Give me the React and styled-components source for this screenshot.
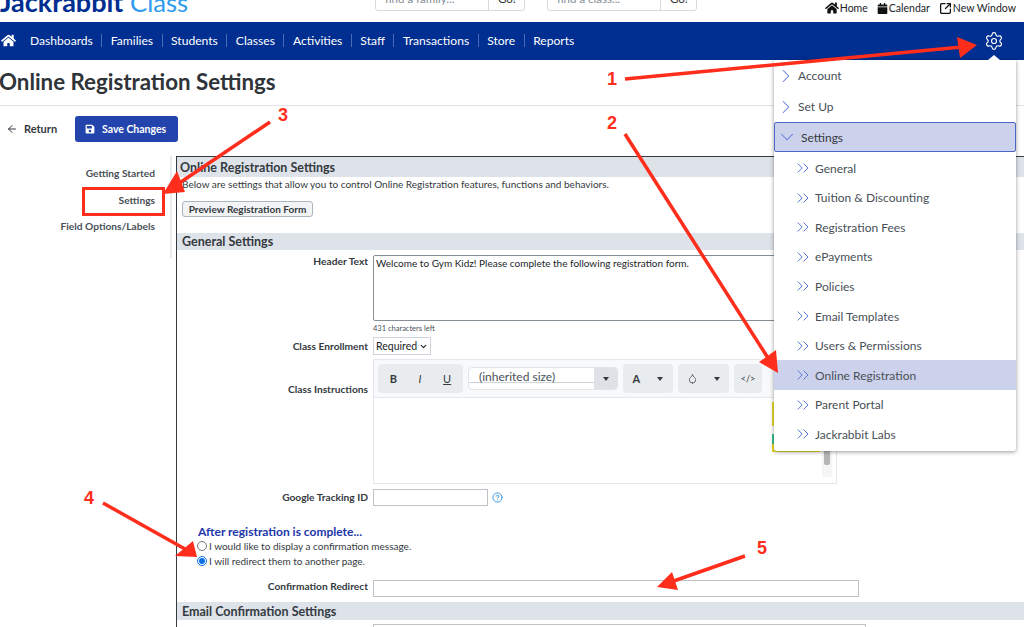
import styled, { createGlobalStyle } from "styled-components";
import { ArrowLeft, ChevronDown, ChevronRight, ChevronsRight, CircleHelp, Droplet, Settings, SquareArrowOutUpRight } from "lucide-react";
import { FaCalendar, FaHome, FaSave } from "react-icons/fa";

const Global = createGlobalStyle`
  html, body { margin: 0; padding: 0; background: #fff; }
  * { box-sizing: border-box; }
  body { font-family: Lato, "Noto Sans", sans-serif; color: #343a40; }
`

const Page = styled.div`
  position: relative;
  width: 1024px;
  height: 627px;
  overflow: hidden;
  background: #fff;
`

const TopBar = styled.header`
  display: flex;
  height: 22px;
  overflow: hidden;
`

const Logo = styled.div`
  width: 375px;
  margin-top: -14px;
  height: 32px;
  font-size: 27px;
  line-height: 32px;
  white-space: nowrap;
  font-weight: 700;
  color: #002e91;
  span { color: #2e9bee; font-size: 25.7px; font-weight: 400; }
`

const SearchGroup = styled.div`
  display: flex;
  width: ${(p) => p.$width}px;
  height: 23px;
  margin-top: -12px;
  margin-right: 22px;
  border: 1px solid #d5d8dc;
  border-radius: 3px;
  font-size: 11.5px;
  line-height: 20px;
`

const SearchInput = styled.div`
  flex: 1;
  padding-left: 9px;
  color: #868e96;
`

const SearchGo = styled.div`
  width: 36px;
  padding-left: 9px;
  border-left: 1px solid #d5d8dc;
  color: #333;
`

const TopLinks = styled.nav`
  display: flex;
  align-items: flex-start;
  gap: 9px;
  margin-left: auto;
  margin-right: 8px;
  padding-top: 1px;
  font-size: 10.5px;
  line-height: 14px;
  color: #212529;
`

const TopLink = styled.span`
  display: flex;
  align-items: center;
  gap: 1px;
`

const NavBar = styled.nav`
  display: flex;
  align-items: center;
  height: 38px;
  background: #002e91;
  color: #fff;
  font-size: 12.1px;
`

const HomeLink = styled.span`
  display: flex;
  width: 30px;
  padding-left: 1px;
  margin-top: -2px;
`

const NavItem = styled.span`
  padding-right: 8.5px;
  margin-right: 8.5px;
  margin-bottom: 1px;
  line-height: 13px;
  border-right: ${(p) => (p.$last ? "none" : "1px solid #4a6cb3")};
`

const GearLink = styled.span`
  display: flex;
  margin-left: auto;
  margin-right: 20px;
`

const TitleRow = styled.div`
  height: 46px;
  border-bottom: 1px solid #dee2e6;
`

const Title = styled.h1`
  margin: 0 0 0 -1px;
  font-size: 22.3px;
  line-height: 44px;
  font-weight: 700;
  color: #2f3439;
`

const ActionRow = styled.div`
  display: flex;
  align-items: center;
  height: 50px;
  padding-left: 6px;
  padding-bottom: 5px;
`

const ReturnLink = styled.span`
  display: flex;
  align-items: center;
  gap: 6px;
  width: 69px;
  font-size: 11px;
  font-weight: 700;
  color: #343a40;
`

const SaveButton = styled.button`
  display: flex;
  align-items: center;
  gap: 7px;
  width: 103px;
  height: 26px;
  padding: 0 0 0 10px;
  border: none;
  border-radius: 3px;
  background: #2344ad;
  color: #fff;
  font: 700 10.5px Lato, sans-serif;
`

const Columns = styled.div`
  display: flex;
  align-items: flex-start;
`

const SideNav = styled.aside`
  display: flex;
  flex-direction: column;
  align-items: flex-end;
  gap: 13.5px;
  width: 172px;
  height: 102px;
  padding: 11px 15px 0 0;
  border-right: 2px solid #e9ecef;
  font-size: 10.2px;
  line-height: 13px;
  font-weight: 700;
  color: #495057;
`

const Panel = styled.main`
  flex: 1;
  margin-left: 4px;
  height: 480px;
  border-left: 1px solid #343a40;
  border-top: 1px solid #343a40;
`

const SectionBar = styled.h2`
  height: ${(p) => p.$height}px;
  margin: ${(p) => p.$top || 0}px 0 0;
  padding: ${(p) => p.$drop || 0}px 0 0 ${(p) => p.$inset}px;
  background: #dee2e9;
  font-size: 12.5px;
  line-height: ${(p) => p.$height - (p.$drop || 0)}px;
  font-weight: 700;
  color: #343a40;
`

const Intro = styled.p`
  margin: 0;
  padding: 1px 0 0 5px;
  height: 24px;
  font-size: 10px;
  line-height: 13px;
  color: #343a40;
`

const PreviewButton = styled.button`
  display: block;
  width: 131px;
  height: 16px;
  margin: 0 0 16px 5px;
  padding: 0;
  border: 1px solid #adb5bd;
  border-radius: 3px;
  background: #f1f3f5;
  color: #343a40;
  font: 700 10px/13px Lato, sans-serif;
`

const FormRow = styled.div`
  display: grid;
  grid-template-columns: 191px auto;
  column-gap: 5px;
  margin-top: ${(p) => p.$top || 0}px;
`

const FieldLabel = styled.label`
  padding-top: ${(p) => p.$drop || 0}px;
  text-align: right;
  font-size: 10.2px;
  line-height: 13px;
  font-weight: 700;
  color: #343a40;
`

const TextBox = styled.div`
  width: 500px;
  height: 66px;
  padding: 1px 2px;
  border: 1px solid #868e96;
  border-radius: 2px;
  font-size: 10px;
  line-height: 13px;
  color: #212529;
`

const CharCount = styled.div`
  height: 14px;
  padding-top: 2px;
  font-size: 7.5px;
  line-height: 11px;
  color: #495057;
`

const SelectBox = styled.div`
  display: flex;
  align-items: center;
  gap: 2px;
  width: 58px;
  height: 18px;
  margin-top: 2px;
  padding-left: 2px;
  border: 1px solid #ced4da;
  font-size: 10.5px;
  color: #212529;
`

const Editor = styled.div`
  width: 464px;
  height: 125px;
  border: 1px solid #e4e8ee;
`

const Toolbar = styled.div`
  display: flex;
  gap: 5px;
  height: 38px;
  padding: 4px 4px;
  background: #f8f9fa;
  border-bottom: 1px solid #e4e8ee;
`

const ToolGroup = styled.div`
  display: flex;
  align-items: center;
  justify-content: space-around;
  width: ${(p) => p.$width}px;
  height: 29px;
  padding: 0 1px;
  border-radius: 4px;
  background: #e9ecef;
  color: #343a40;
  font-size: 10px;
`

const ToolText = styled.span`
  font-size: ${(p) => p.$size || 11}px;
  font-weight: ${(p) => (p.$bold ? 700 : 400)};
  font-style: ${(p) => (p.$italic ? "italic" : "normal")};
  text-decoration: ${(p) => (p.$underline ? "underline" : "none")};
`

const Caret = styled.i`
  width: 0;
  height: 0;
  border-left: 3px solid transparent;
  border-right: 3px solid transparent;
  border-top: 4px solid #343a40;
`

const SizeSelect = styled.div`
  display: flex;
  width: 150px;
  height: 23px;
  margin-top: 3px;
  border: 1px solid #e1e4e8;
  border-radius: 4px;
  background: #fff;
  overflow: hidden;
`

const SizeValue = styled.div`
  flex: 1;
  height: 15px;
  padding: 2px 0 0 10px;
  border-bottom: 1px solid #ced4da;
  font-size: 12px;
  line-height: 13px;
  color: #495057;
`

const SizeArrow = styled.div`
  display: flex;
  align-items: center;
  justify-content: center;
  width: 23px;
  background: #dee2e6;
`

const EditorBody = styled.div`
  display: flex;
  align-items: flex-start;
  padding-left: 398px;
`

const PictureEdge = styled.div`
  width: 48px;
  height: 50px;
  margin-top: 4px;
  border-bottom: 2px solid #eadb2c;
  background: linear-gradient(#eadb2c 0 24px, #fff 24px 32px, #3cc48c 32px 42px, #eadb2c 42px) no-repeat left top / 3px 100%;
`

const ScrollTrack = styled.div`
  width: 10px;
  height: 30px;
  margin: 49px 0 0 2px;
  padding: 1px 2px 0;
  background: #f5f5f5;
`

const ScrollThumb = styled.div`
  height: 17px;
  border-radius: 2px;
  background: #b5b5b5;
`

const FieldLine = styled.div`
  display: flex;
  align-items: center;
  gap: 4px;
  color: #2f8fe0;
`

const TextInput = styled.div`
  width: ${(p) => p.$width}px;
  height: ${(p) => p.$height || 17}px;
  border: 1px solid #bcc2c8;
`

const ChoiceBlock = styled.div`
  height: 51px;
  margin-top: 18px;
  padding-left: 20px;
`

const ChoiceTitle = styled.div`
  height: 15px;
  padding-left: 1px;
  font-size: 12px;
  line-height: 15px;
  font-weight: 700;
  color: #1b36a8;
`

const Choice = styled.label`
  display: flex;
  align-items: center;
  gap: 2px;
  height: 14.5px;
  font-size: 10px;
  color: #343a40;
`

const Radio = styled.input`
  width: 10px;
  height: 10px;
  margin: 0;
  accent-color: #0b6fe8;
`

const Menu = styled.div`
  position: absolute;
  top: 60px;
  left: 774px;
  width: 242px;
  height: 391px;
  background: #fff;
  box-shadow: 0 1px 4px rgba(0, 0, 0, 0.4);
  border-radius: 0 0 3px 3px;
  font-size: 12px;
  color: #495057;
  &::before {
    content: "";
    position: absolute;
    top: -5px;
    left: 214px;
    border-left: 6px solid transparent;
    border-right: 6px solid transparent;
    border-bottom: 5px solid #fff;
  }
`

const MenuGroup = styled.div`
  display: flex;
  align-items: center;
  gap: ${(p) => (p.$open ? 3 : 1)}px;
  height: ${(p) => (p.$open ? 30 : 31)}px;
  padding-left: 1px;
  color: ${(p) => (p.$open ? "#343a40" : "#495057")};
  ${(p) => p.$open && "background: #cdd2ec; border: 1px solid #4b66c6; border-radius: 2px;"}
`

const MenuList = styled.div`
  padding-top: 1.5px;
`

const MenuItem = styled.div`
  display: flex;
  align-items: center;
  gap: 2.5px;
  height: 29.55px;
  padding-left: 18.5px;
  background: ${(p) => (p.$active ? "#cdd2ec" : "transparent")};
`

const MenuIcon = styled.span`
  display: flex;
  color: #5a78d6;
`

const Overlay = styled.svg`
  position: absolute;
  top: 0;
  left: 0;
  pointer-events: none;
`

const Callout = styled.span`
  position: absolute;
  top: ${(p) => p.$y}px;
  left: ${(p) => p.$x}px;
  font: 700 18px/20px "Liberation Sans", sans-serif;
  color: #ff2d1c;
`

const Highlight = styled.div`
  position: absolute;
  top: 187px;
  left: 82px;
  width: 83px;
  height: 29px;
  border: 3px solid #ff2d1c;
`

const navItems = ["Dashboards", "Families", "Students", "Classes", "Activities", "Staff", "Transactions", "Store", "Reports"];
const settingsItems = ["General", "Tuition & Discounting", "Registration Fees", "ePayments", "Policies", "Email Templates", "Users & Permissions", "Online Registration", "Parent Portal", "Jackrabbit Labs"];

const arrows = [
  { line: "625,79 962,47", head: "977,45 957,37 960,58" },
  { line: "625,134 768,358", head: "778,373 759,362 776,350" },
  { line: "270,122 175,186", head: "163,194 177,171 185,192" },
  { line: "103,503 185,549", head: "197,557 175,556 193,541" },
  { line: "745,556 668,583", head: "657,587 672,572 678,590" },
];

const callouts = [
  { id: "1", x: 607, y: 69 },
  { id: "2", x: 607, y: 113 },
  { id: "3", x: 278, y: 105 },
  { id: "4", x: 84, y: 488 },
  { id: "5", x: 757, y: 538 },
];

export default function App() {
  return (
    <Page>
      <Global />
      <TopBar>
        <Logo>Jackrabbit <span>Class</span></Logo>
        <SearchGroup $width={150}>
          <SearchInput>find a family...</SearchInput>
          <SearchGo>Go!</SearchGo>
        </SearchGroup>
        <SearchGroup $width={150}>
          <SearchInput>find a class...</SearchInput>
          <SearchGo>Go!</SearchGo>
        </SearchGroup>
        <TopLinks>
          <TopLink><FaHome size={14} color="#111" />Home</TopLink>
          <TopLink><FaCalendar size={11} color="#111" />Calendar</TopLink>
          <TopLink><SquareArrowOutUpRight size={13} strokeWidth={2.4} color="#111" />New Window</TopLink>
        </TopLinks>
      </TopBar>

      <NavBar>
        <HomeLink><FaHome size={15} /></HomeLink>
        {navItems.map((item, i) => (
          <NavItem key={item} $last={i === navItems.length - 1}>{item}</NavItem>
        ))}
        <GearLink><Settings size={20} strokeWidth={1.4} /></GearLink>
      </NavBar>

      <TitleRow>
        <Title>Online Registration Settings</Title>
      </TitleRow>

      <ActionRow>
        <ReturnLink><ArrowLeft size={12} />Return</ReturnLink>
        <SaveButton><FaSave size={10} />Save Changes</SaveButton>
      </ActionRow>

      <Columns>
        <SideNav>
          <span>Getting Started</span>
          <span>Settings</span>
          <span>Field Options/Labels</span>
        </SideNav>

        <Panel>
          <SectionBar $height={20} $inset={3} $drop={2}>Online Registration Settings</SectionBar>
          <Intro>Below are settings that allow you to control Online Registration features, functions and behaviors.</Intro>
          <PreviewButton>Preview Registration Form</PreviewButton>
          <SectionBar $height={17} $inset={5}>General Settings</SectionBar>

          <FormRow $top={5}>
            <FieldLabel>Header Text</FieldLabel>
            <div>
              <TextBox>Welcome to Gym Kidz! Please complete the following registration form.</TextBox>
              <CharCount>431 characters left</CharCount>
            </div>
          </FormRow>

          <FormRow>
            <FieldLabel $drop={5}>Class Enrollment</FieldLabel>
            <SelectBox>Required<ChevronDown size={9} strokeWidth={3} /></SelectBox>
          </FormRow>

          <FormRow $top={4}>
            <FieldLabel $drop={24}>Class Instructions</FieldLabel>
            <Editor>
              <Toolbar>
                <ToolGroup $width={85}>
                  <ToolText $bold>B</ToolText>
                  <ToolText $italic>I</ToolText>
                  <ToolText $underline>U</ToolText>
                </ToolGroup>
                <SizeSelect>
                  <SizeValue>(inherited size)</SizeValue>
                  <SizeArrow><Caret /></SizeArrow>
                </SizeSelect>
                <ToolGroup $width={50}><ToolText $bold>A</ToolText><Caret /></ToolGroup>
                <ToolGroup $width={51}><Droplet size={11} strokeWidth={1.5} /><Caret /></ToolGroup>
                <ToolGroup $width={28}><ToolText $size={9}>&lt;/&gt;</ToolText></ToolGroup>
              </Toolbar>
              <EditorBody>
                <PictureEdge />
                <ScrollTrack><ScrollThumb /></ScrollTrack>
              </EditorBody>
            </Editor>
          </FormRow>

          <FormRow $top={5}>
            <FieldLabel $drop={2}>Google Tracking ID</FieldLabel>
            <FieldLine>
              <TextInput $width={115} />
              <CircleHelp size={11} strokeWidth={2} />
            </FieldLine>
          </FormRow>

          <ChoiceBlock>
            <ChoiceTitle>After registration is complete...</ChoiceTitle>
            <Choice><Radio type="radio" name="after" />I would like to display a confirmation message.</Choice>
            <Choice><Radio type="radio" name="after" defaultChecked />I will redirect them to another page.</Choice>
          </ChoiceBlock>

          <FormRow $top={5}>
            <FieldLabel>Confirmation Redirect</FieldLabel>
            <TextInput $width={486} />
          </FormRow>

          <SectionBar as="div" $top={5} $height={18} $inset={5} $drop={1}>Email Confirmation Settings</SectionBar>

          <FormRow $top={4}>
            <span />
            <TextInput $width={493} $height={30} />
          </FormRow>
        </Panel>
      </Columns>

      <Menu>
        <MenuGroup><MenuIcon><ChevronRight size={22} strokeWidth={1.1} /></MenuIcon>Account</MenuGroup>
        <MenuGroup><MenuIcon><ChevronRight size={22} strokeWidth={1.1} /></MenuIcon>Set Up</MenuGroup>
        <MenuGroup $open><MenuIcon><ChevronDown size={22} strokeWidth={1.1} /></MenuIcon>Settings</MenuGroup>
        <MenuList>
          {settingsItems.map((item) => (
            <MenuItem key={item} $active={item === "Online Registration"}>
              <MenuIcon><ChevronsRight size={20} strokeWidth={1.2} /></MenuIcon>
              {item}
            </MenuItem>
          ))}
        </MenuList>
      </Menu>

      <Highlight />
      <Overlay width="1024" height="627">
        {arrows.map((a) => (
          <g key={a.line}>
            <polyline points={a.line} stroke="#ff2d1c" strokeWidth="3.5" fill="none" />
            <polygon points={a.head} fill="#ff2d1c" />
          </g>
        ))}
      </Overlay>
      {callouts.map((c) => (
        <Callout key={c.id} $x={c.x} $y={c.y}>{c.id}</Callout>
      ))}
    </Page>
  );
}
